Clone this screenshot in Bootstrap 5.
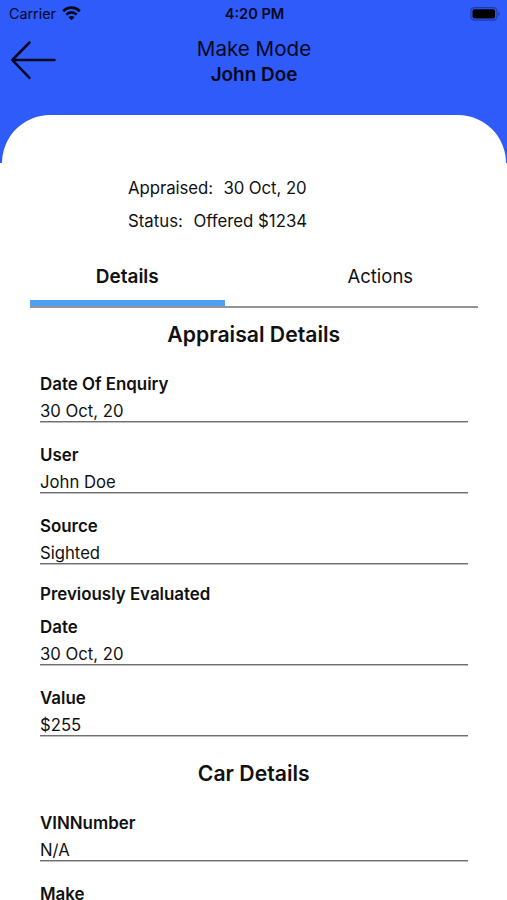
<!DOCTYPE html>
<html lang="en">
<head>
<meta charset="utf-8">
<meta name="viewport" content="width=device-width, initial-scale=1">
<title>Appraisal</title>
<link href="https://cdn.jsdelivr.net/npm/bootstrap@5.3.0/dist/css/bootstrap.min.css" rel="stylesheet">
<style>
  body { font-family: Inter, "Liberation Sans", sans-serif; color: #111; background: #fff; }
  .app-top { background: #2e5bfa; color: #04081c; height: 163px; }
  .status-bar { height: 28px; padding: 0 7px 0 9px; font-size: 14.3px; line-height: 28px; }
  .status-bar .side { flex: 1 1 0; }
  .clock { font-size: 14.6px; font-weight: 600; }
  .title-bar { height: 86.5px; padding: 7.5px 9px 0 10px; }
  .title-bar .edge { width: 48px; padding-top: 4.5px; }
  .screen-title { font-size: 20.6px; line-height: 26px; }
  .screen-name { font-size: 18.9px; line-height: 26px; font-weight: 600; }
  .sheet-cap { margin: 0 1px 0 2px; height: 48.5px; background: #fff; border-radius: 50px 50px 0 0; }
  .summary { padding: 9px 0 0 128px; font-size: 16.8px; line-height: 32.5px; }
  .summary .gap-word { column-gap: 10.5px; }
  .summary .gap-word:first-child { letter-spacing: -.08px; }
  .tabs { margin: 16px 29.5px 0 30px; height: 54.5px; border-bottom: 2px solid #949498; }
  .tabs a { color: #111; font-size: 18.5px; line-height: 46px; text-decoration: none; }
  .tabs .tab-left { width: 194.5px; }
  .tabs .tab-right { width: 194.5px; }
  .tabs .is-active { font-weight: 600; font-size: 19px; line-height: 47px; border-bottom: 6px solid #509ff3; }
  .fields { padding: 8.5px 39.5px 0 40px; }
  .section-head { font-size: 21.2px; font-weight: 600; line-height: 36px; margin: 0 0 17.5px; }
  .entry { margin-bottom: 18px; height: 53px; font-size: 16.7px; }
  .entry dt, .group-name { font-size: 16.9px; font-weight: 600; line-height: 28px; }
  .entry dd { margin: 0; padding-top: 3px; height: 24px; line-height: 20px; border-bottom: 1px solid #707070; box-shadow: 0 1px #bdbdbd; }
  .group-name { line-height: 22px; margin-bottom: 8.5px; }
  .entry.is-last { height: 28px; margin: 0; }
</style>
</head>
<body>
<header class="app-top">
  <div class="status-bar d-flex align-items-center">
    <div class="side d-flex align-items-center">
      <span>Carrier</span>
      <svg style="margin:-2px 0 0 5px" width="21" height="16" viewBox="0 0 21 16" fill="none" stroke="#04081c" stroke-width="2.7">
        <path d="M2.2 6.2a11.6 11.6 0 0 1 16.6 0"/>
        <path d="M5.3 9.6a7.3 7.3 0 0 1 10.4 0"/>
        <path d="M7.5 12.2a4.1 4.1 0 0 1 6 0L10.5 15.2z" fill="#04081c" stroke="none"/>
      </svg>
    </div>
    <div class="clock">4:20 PM</div>
    <div class="side d-flex justify-content-end">
      <svg width="30" height="15" viewBox="0 0 30 15">
        <rect x=".9" y=".6" width="26" height="12.5" rx="3.6" fill="none" stroke="#1d3aa2" stroke-width="1.1"/>
        <rect x="2.5" y="2.3" width="22.6" height="9.1" rx="2" fill="#000"/>
        <path d="M28.3 4.8q1.5.7 1.5 2t-1.5 2z" fill="#1d3aa2"/>
      </svg>
    </div>
  </div>
  <div class="title-bar d-flex justify-content-between">
    <div class="edge">
      <svg width="48" height="40" viewBox="0 0 48 40" fill="none" stroke="#04081c" stroke-width="2.5" stroke-linecap="round" stroke-linejoin="round">
        <path d="M19.5 2.5 2.3 20 19.5 37.8M2.3 20H44.5"/>
      </svg>
    </div>
    <div class="text-center">
      <div class="screen-title">Make Mode</div>
      <div class="screen-name">John Doe</div>
    </div>
    <div class="edge"></div>
  </div>
  <div class="sheet-cap"></div>
</header>
<main>
  <div class="summary">
    <div class="gap-word d-flex"><span>Appraised:</span><span>30 Oct, 20</span></div>
    <div class="gap-word d-flex"><span>Status:</span><span>Offered $1234</span></div>
  </div>
  <nav class="tabs d-flex justify-content-between text-center">
    <a class="tab-left is-active" href="#">Details</a>
    <a class="tab-right" href="#">Actions</a>
  </nav>
  <div class="fields">
    <h2 class="section-head text-center">Appraisal Details</h2>
    <dl class="entry"><dt>Date Of Enquiry</dt><dd>30 Oct, 20</dd></dl>
    <dl class="entry"><dt>User</dt><dd>John Doe</dd></dl>
    <dl class="entry"><dt>Source</dt><dd>Sighted</dd></dl>
    <div class="group-name">Previously Evaluated</div>
    <dl class="entry"><dt>Date</dt><dd>30 Oct, 20</dd></dl>
    <dl class="entry"><dt>Value</dt><dd>$255</dd></dl>
    <h2 class="section-head text-center">Car Details</h2>
    <dl class="entry"><dt>VINNumber</dt><dd>N/A</dd></dl>
    <dl class="entry is-last"><dt>Make</dt></dl>
  </div>
</main>
<script src="https://cdn.jsdelivr.net/npm/bootstrap@5.3.0/dist/js/bootstrap.bundle.min.js"></script>
</body>
</html>
